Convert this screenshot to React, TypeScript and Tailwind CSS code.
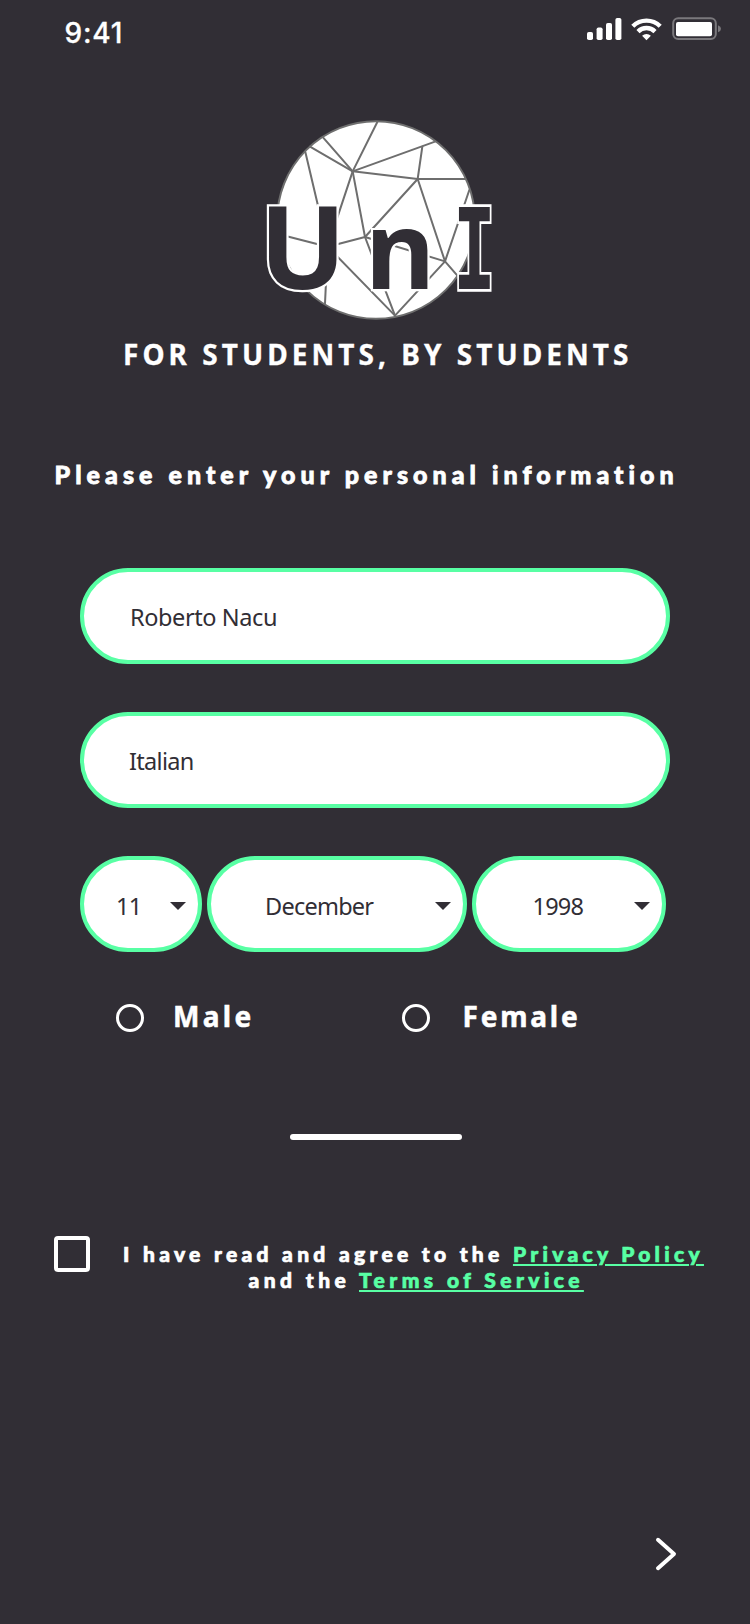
import type { ReactNode } from "react";

const NET: [number, number, number, number][] = [
  [382, 36, 308, 184],
  [219, 82, 308, 184],
  [180, 110, 308, 184],
  [308, 184, 555, 95],
  [308, 184, 503, 207],
  [517, 110, 503, 207],
  [503, 207, 645, 207],
  [166, 126, 233, 410],
  [308, 184, 233, 410],
  [84, 372, 233, 410],
  [233, 410, 345, 381],
  [233, 410, 225, 580],
  [233, 410, 435, 617],
  [308, 184, 345, 381],
  [345, 381, 503, 207],
  [345, 381, 435, 617],
  [345, 381, 585, 454],
  [503, 207, 585, 454],
  [585, 454, 658, 240],
  [585, 454, 630, 506],
  [585, 454, 435, 617],
];

function Logo() {
  return (
    <svg viewBox="0 0 780 660" className="ml-[250px] h-[220px] w-[260px]">
      <circle cx="378" cy="330" r="296.5" fill="#fff" stroke="#6e6e6e" strokeWidth="6" />
      <g stroke="#6e6e6e" strokeWidth="6" strokeLinecap="round">
        {NET.map(([x1, y1, x2, y2], i) => (
          <line key={i} x1={x1} y1={y1} x2={x2} y2={y2} />
        ))}
      </g>
      <g
        className="font-['Noto_Sans',sans-serif] font-bold"
        fill="#312e35"
        stroke="#fff"
        strokeWidth="13"
        paintOrder="stroke"
      >
        <text x="28" y="537" fontSize="345">U</text>
        <text x="346" y="537" fontSize="322">n</text>
        <text
          className="font-['DejaVu_Sans_Mono',monospace]"
          transform="translate(609 537) scale(.63 1)"
          fontSize="338"
          strokeWidth="16"
        >
          I
        </text>
      </g>
    </svg>
  );
}

function StatusIcons() {
  return (
    <svg viewBox="0 0 140 30" className="mt-[14px] h-[30px] w-[140px]" fill="#fff">
      <rect x="2" y="18" width="6" height="8" rx="1.8" />
      <rect x="11.6" y="13.5" width="6" height="12.5" rx="1.8" />
      <rect x="21" y="9" width="6" height="17" rx="1.8" />
      <rect x="30.4" y="4" width="6" height="22" rx="1.8" />
      <g fill="none" stroke="#fff" strokeWidth="4.4">
        <path d="M47.8 12.2a19.5 19.5 0 0 1 27.4 0" />
        <path d="M53 17.6a12 12 0 0 1 17 0" />
      </g>
      <path d="M61.5 26.2l-4.4-4.4a6.4 6.4 0 0 1 8.8 0z" />
      <rect x="88.2" y="4.2" width="42.6" height="20.9" rx="5" fill="none" stroke="#7a787c" strokeWidth="2" />
      <rect x="91" y="8" width="36" height="14.2" rx="2" />
      <path d="M133 11.2q3 1.2 3 3.5t-3 3.5z" fill="#7a787c" />
    </svg>
  );
}

function Caret() {
  return (
    <svg viewBox="0 0 16 8" className="mt-[3px] h-2 w-4 shrink-0" fill="#312e35">
      <path d="M0 0h16L8 8z" />
    </svg>
  );
}

const FIELD =
  "h-24 rounded-full border-4 border-[#58ffa4] bg-white flex items-center font-['Noto_Sans',sans-serif] text-[23.5px] leading-[30px] text-[#312e35] whitespace-nowrap";

function Link({ children }: { children: ReactNode }) {
  return (
    <a href="#" className="text-[#58ffa4] underline decoration-2 underline-offset-[2px]">
      {children}
    </a>
  );
}

export default function App() {
  return (
    <div className="flex h-[1624px] w-[750px] flex-col overflow-hidden bg-[#312e35] text-white">
      <header className="flex h-[110px] items-start justify-between pl-[64.5px] pr-[25px]">
        <span className="mt-[13px] font-['Inter',sans-serif] text-[28px] font-medium leading-[40px] tracking-[0.8px] [-webkit-text-stroke:0.3px_currentColor]">9:41</span>
        <StatusIcons />
      </header>

      <Logo />

      <p className="mt-1 whitespace-nowrap pl-[123px] font-['Noto_Sans',sans-serif] text-[28px] font-bold leading-[40px] tracking-[4.04px] [-webkit-text-stroke:0.3px_currentColor]">
        FOR STUDENTS, BY STUDENTS
      </p>
      <h1 className="mt-[85px] whitespace-nowrap pl-[54.5px] font-['Lato',sans-serif] text-[25px] font-black leading-[30px] tracking-[5.05px] [-webkit-text-stroke:0.8px_currentColor]">
        Please enter your personal information
      </h1>

      <form className="mt-[79px] flex flex-col pl-20">
        <div className={`${FIELD} w-[590px] pl-[46px] pt-[2px] tracking-[-0.4px]`}>Roberto Nacu</div>
        <div className={`${FIELD} mt-12 w-[590px] pl-[45px] pt-[2px] tracking-[-0.7px]`}>Italian</div>
        <div className="mt-12 flex gap-[5px]">
          <div className={`${FIELD} w-[122px] justify-between pl-[32px] pr-[12px]`}>
            <span className="pt-1 tracking-[-0.8px]">11</span>
            <Caret />
          </div>
          <div className={`${FIELD} w-[260px] justify-between pl-[54px] pr-[12px]`}>
            <span className="pt-1 tracking-[-0.75px]">December</span>
            <Caret />
          </div>
          <div className={`${FIELD} w-[194px] justify-between pl-[56.5px] pr-[12px]`}>
            <span className="pt-1 tracking-[-0.8px]">1998</span>
            <Caret />
          </div>
        </div>
        <div className="mt-[48px] flex h-[36px] items-start pl-9 font-['Noto_Sans',sans-serif] text-[28px] font-bold leading-[30px]">
          <span className="mt-1 h-[28px] w-[28px] shrink-0 rounded-full border-[3px] border-white" />
          <span className="mt-px w-[258px] pl-[29px] tracking-[3.3px] [-webkit-text-stroke:0.5px_currentColor]">Male</span>
          <span className="mt-1 h-[28px] w-[28px] shrink-0 rounded-full border-[3px] border-white" />
          <span className="mt-px pl-[32.5px] tracking-[2.8px] [-webkit-text-stroke:0.5px_currentColor]">Female</span>
        </div>
      </form>

      <div className="ml-[290px] mt-[98px] h-[6px] w-[172px] rounded-[3px] bg-white" />

      <div className="mt-24 flex items-start pl-[54px]">
        <span className="h-9 w-9 shrink-0 rounded-[4px] border-4 border-white" />
        <p className="ml-[33px] mt-[5px] w-[581px] whitespace-nowrap font-['Lato',sans-serif] text-[21px] font-black leading-[26px] tracking-[4.3px] [-webkit-text-stroke:0.7px_currentColor]">
          I have read and agree to the <Link>Privacy Policy</Link>
          <br />
          <span className="ml-[125.5px] tracking-[4.43px]">
            and the <Link>Terms of Service</Link>
          </span>
        </p>
      </div>

      <svg
        viewBox="0 0 24 36"
        className="ml-[654px] mt-[243px] h-9 w-6 shrink-0"
        fill="none"
        stroke="#fff"
        strokeWidth="4"
        strokeLinecap="round"
        strokeLinejoin="round"
      >
        <path d="M4 3.8L20 18L4 32.2" />
      </svg>
    </div>
  );
}
